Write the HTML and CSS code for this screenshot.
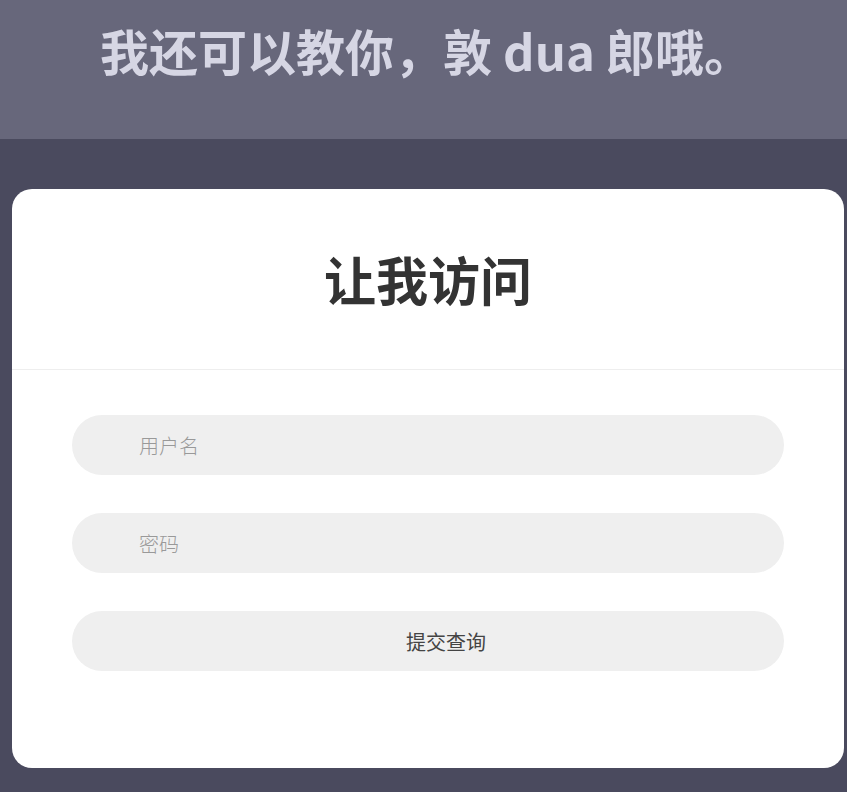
FILE: index.html
```html
<!DOCTYPE html>
<html lang="zh-CN">
<head>
    <meta charset="UTF-8">
    <meta name="viewport" content="width=device-width, initial-scale=1.0">
    <title>让我访问</title>
    <link rel="stylesheet" href="styles.css">
</head>
<body>
    <div class="top-bar">
        <h1>我还可以教你，敦 dua 郎哦。</h1>
    </div>

    <div class="card">
        <div class="card-head">
            <h2>让我访问</h2>
        </div>
        <form class="login-form" onsubmit="return false;">
            <input type="text" class="field" placeholder="用户名">
            <input type="password" class="field" placeholder="密码">
            <button type="submit" class="submit-btn">提交查询</button>
        </form>
    </div>
</body>
</html>
```

FILE: styles.css
```css
body {
    margin: 0;
    font-family: "Noto Sans CJK SC", "Noto Sans", sans-serif;
    background-color: #4a4a5e;
    height: 792px;
    overflow: hidden;
}
.top-bar {
    height: 139px;
    box-sizing: border-box;
    background-color: #67677b;
    display: flex;
    align-items: center;
    padding: 0 0 40px 100px;
}
.top-bar h1 {
    margin: 0;
    font-size: 49px;
    line-height: 1;
    font-weight: bold;
    color: #d6d6e4;
}
.card {
    width: 832px;
    margin: 50px 0 0 12px;
    background-color: #fff;
    border-radius: 20px;
    padding-bottom: 97px;
}
.card-head {
    height: 181px;
    border-bottom: 1px solid #eee;
    display: flex;
    align-items: center;
    justify-content: center;
    box-sizing: border-box;
}
.card-head h2 {
    margin: 0;
    font-size: 52px;
    line-height: 1;
    font-weight: bold;
    color: #333;
}
.login-form {
    display: flex;
    flex-direction: column;
    gap: 38px;
    padding: 45px 60px 0;
}
.field, .submit-btn {
    height: 60px;
    border: none;
    border-radius: 30px;
    background-color: #efefef;
    font-family: inherit;
    font-size: 20px;
    outline: none;
    box-sizing: border-box;
}
.field {
    padding: 0 30px 0 67px;
    color: #333;
}
.field::placeholder {
    color: #999;
    font-weight: 300;
}
.submit-btn {
    padding: 0 0 0 36px;
    color: #444;
    cursor: pointer;
}
```
